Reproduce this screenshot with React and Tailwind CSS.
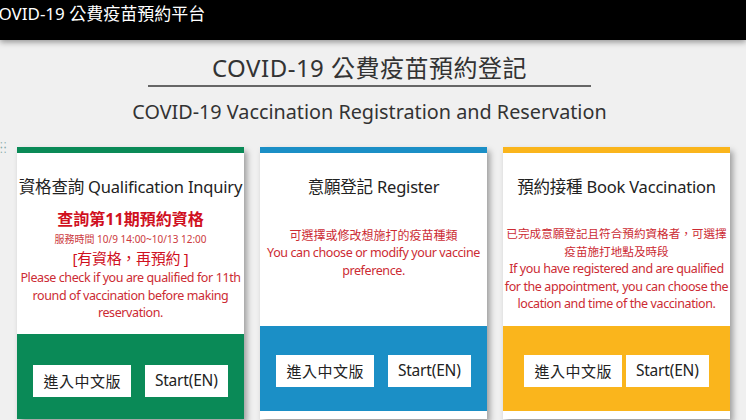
import React from 'react';

const font = { fontFamily: '"Noto Sans", "Noto Sans CJK TC", sans-serif' };

function Buttons({ tight, top }) {
  return (
    <div className={`flex justify-center ${top} ${tight ? 'gap-[4px]' : 'gap-[14px]'}`}>
      <button className="h-[32px] px-[10px] bg-white text-[15px] text-[#222] tracking-[0.5px]">進入中文版</button>
      <button className="h-[32px] px-[10px] bg-white text-[15.5px] text-[#222] tracking-[-0.2px]">Start(EN)</button>
    </div>
  );
}

function Card({ color, bodyHeight, tight, top = 'pt-[29px]', children }) {
  return (
    <div className="w-[227px] shrink-0 bg-white shadow-[3px_4px_6px_rgba(0,0,0,0.35)]">
      <div className={`h-[6px] ${color}`} />
      <div className={`${bodyHeight} text-center whitespace-nowrap`}>{children}</div>
      <div className={`h-[85px] ${color}`}>
        <Buttons tight={tight} top={top} />
      </div>
    </div>
  );
}

const red = 'text-[12.5px] leading-[17.6px] tracking-[-0.4px] text-[#cc2b33]';

export default function App() {
  return (
    <div className="w-[746px] h-[420px] overflow-hidden bg-[#f0f0f0]" style={font}>
      {/* top bar */}
      <div className="h-[40px] bg-black shadow-[0_2px_6px_rgba(0,0,0,0.4)] pt-[2px]">
        <p className="ml-[-12px] text-[17px] text-white leading-[24px] whitespace-nowrap">COVID-19 公費疫苗預約平台</p>
      </div>

      {/* heading */}
      <div className="flex flex-col items-center pt-[12px] pr-[7px]">
        <h1 className="w-[443px] text-center text-[24px] leading-[32px] tracking-[0.5px] text-[#333] border-b-2 border-[#666] pb-[1px]">
          COVID-19 公費疫苗預約登記
        </h1>
        <h2 className="mt-[12px] text-[19.8px] leading-[26px] text-[#333] whitespace-nowrap">
          COVID-19 Vaccination Registration and Reservation
        </h2>
      </div>

      {/* cards */}
      <div className="relative flex justify-center gap-4 mt-[22px] pl-[1px]">
        <span className="absolute left-0 top-[-5px] text-[10px] leading-[5px] tracking-[1px] text-[#8aa] whitespace-pre">{'::\n::'}</span>

        <Card color="bg-[#0a8a57]" bodyHeight="h-[181px]" top="pt-[31px]">
          <p className="pt-[22px] text-[16.5px] leading-[24px] tracking-[-0.2px] text-[#222]">資格查詢 Qualification Inquiry</p>
          <p className="mt-[9px] text-[16px] leading-[22px] font-bold text-[#d0101e]">查詢第11期預約資格</p>
          <p className="text-[10px] leading-[18px] text-[#cc3a40]">服務時間 10/9 14:00~10/13 12:00</p>
          <p className="text-[15px] leading-[21px] tracking-[-0.3px] text-[#d0101e]">[有資格，再預約 ]</p>
          <p className={red}>
            Please check if you are qualified for 11th
            <br />
            round of vaccination before making
            <br />
            reservation.
          </p>
        </Card>

        <Card color="bg-[#1b8fc6]" bodyHeight="h-[173px]">
          <p className="pt-[22px] text-[16.5px] leading-[24px] tracking-[-0.2px] text-[#222]">意願登記 Register</p>
          <p className="mt-[28px] text-[12px] leading-[17px] text-[#cc2b33]">可選擇或修改想施打的疫苗種類</p>
          <p className={red}>
            You can choose or modify your vaccine
            <br />
            preference.
          </p>
        </Card>

        <Card color="bg-[#fab51c]" bodyHeight="h-[173px]" tight>
          <p className="pt-[22px] text-[16.5px] leading-[24px] tracking-[-0.2px] text-[#222]">預約接種 Book Vaccination</p>
          <p className="mt-[26px] text-[11.6px] leading-[17.5px] text-[#cc2b33]">
            已完成意願登記且符合預約資格者，可選擇
            <br />
            疫苗施打地點及時段
          </p>
          <p className={red}>
            If you have registered and are qualified
            <br />
            for the appointment, you can choose the
            <br />
            location and time of the vaccination.
          </p>
        </Card>
      </div>
    </div>
  );
}
